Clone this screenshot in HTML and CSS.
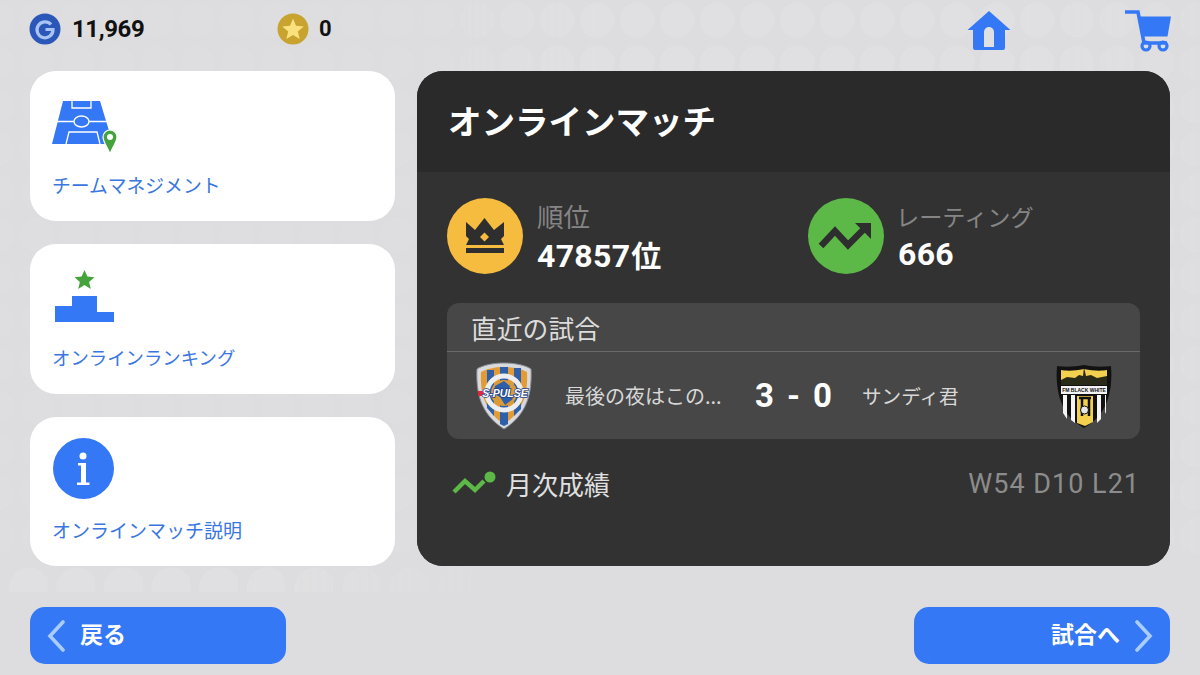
FILE: index.html
```html
<!DOCTYPE html>
<html lang="ja">
<head>
<meta charset="utf-8">
<title>オンラインマッチ</title>
<link rel="stylesheet" href="styles.css">
</head>
<body>
<div class="page">
  <div class="dots"></div>
  <div class="dots-low"></div>
  <header class="topbar">
    <div class="currency gp">
      <svg class="coin" viewBox="0 0 32 32"><circle cx="16" cy="16" r="15.5" fill="#2b58b8"/><path d="M22 11.5A8 8 0 1 0 24 16.500H16.500" fill="none" stroke="#a9c3f2" stroke-width="3.200"/></svg>
      <span class="amount">11,969</span>
    </div>
    <div class="currency star">
      <svg class="coin" viewBox="0 0 32 32"><circle cx="16" cy="16" r="15.500" fill="#c8a32f"/><path d="M16 5.500l3 7.300 7.800.6-6 5 1.900 7.600L16 21.900l-6.700 4.100 1.900-7.600-6-5 7.800-.6z" fill="#fbe07f"/></svg>
      <span class="amount">0</span>
    </div>
    <nav class="topicons">
      <svg class="home" viewBox="0 0 44 40"><path d="M22 0L43.500 19H38V37a2 2 0 0 1-2 2H8a2 2 0 0 1-2-2V19H.5z" fill="#3478f6"/><path d="M17 36V21a5 5 0 0 1 10 0V36z" fill="#e0e0e2"/></svg>
      <svg class="cart" viewBox="0 0 48 42"><path d="M1 2H14L20 33H43" fill="none" stroke="#3478f6" stroke-width="3.600"/><path d="M14.500 6.500H47L43.500 26.500H18z" fill="#3478f6"/><circle cx="22" cy="36" r="4" fill="none" stroke="#3478f6" stroke-width="3.200"/><circle cx="39" cy="36" r="4" fill="none" stroke="#3478f6" stroke-width="3.200"/></svg>
    </nav>
  </header>

  <main class="content">
    <aside class="side">
      <a class="card">
        <svg class="icon-pitch" viewBox="0 0 66 54">
          <path d="M11 0H48L61 43H0z" fill="#3478f6"/>
          <g fill="none" stroke="#fff" stroke-width="1.300">
            <path d="M4 20.500H57"/>
            <path d="M20 0V7H39V0"/>
            <ellipse cx="29.500" cy="20.500" rx="7.500" ry="5.500" fill="#3478f6"/>
            <path d="M14 43L17 31H45L48 43"/>
          </g>
          <path d="M58 29a7 7 0 0 1 7 7c0 5-4 9-7 17-3-8-7-12-7-17a7 7 0 0 1 7-7z" fill="#45a23c" stroke="#fff" stroke-width="1.200"/>
          <circle cx="58" cy="36" r="3" fill="#fff"/>
        </svg>
        <span class="label label-first">チームマネジメント</span>
      </a>
      <a class="card">
        <svg class="icon-rank" viewBox="0 0 60 53">
          <path d="M29.500 0l2.900 6.600 7.100.6-5.400 4.700 1.700 7-6.300-3.900-6.300 3.900 1.700-7-5.400-4.700 7.100-.6z" fill="#45a23c"/>
          <path d="M0 36H17V26H42V42H59V52H0z" fill="#3478f6"/>
        </svg>
        <span class="label label-tight">オンラインランキング</span>
      </a>
      <a class="card">
        <svg class="icon-info" viewBox="0 0 61 61">
          <circle cx="30.500" cy="30.500" r="30.500" fill="#3478f6"/>
          <circle cx="30" cy="18" r="3.500" fill="#fff"/>
          <path d="M25 25H33V44.500H36.500V47H24V44.500H28V27.500H25z" fill="#fff"/>
        </svg>
        <span class="label label-wide">オンラインマッチ説明</span>
      </a>
    </aside>

    <section class="panel">
      <h1 class="panel-title">オンラインマッチ</h1>
      <div class="panel-body">
        <div class="stats">
          <div class="stat">
            <svg class="stat-icon" viewBox="0 0 76 76">
              <circle cx="38" cy="38" r="38" fill="#f5bc3f"/>
              <path d="M19 24L28 32L37.500 20L47 32L57 24V38L54 41L57 47H19L22 41L19 38z" fill="#2e2e2e"/>
              <path d="M37.500 34.500l4.500 4.500-4.500 4.500-4.500-4.500z" fill="#f5bc3f"/>
              <rect x="19" y="50" width="38" height="5" fill="#2e2e2e"/>
            </svg>
            <div class="stat-text">
              <div class="stat-label stat-label-wide">順位</div>
              <div class="stat-value">47857<span class="unit">位</span></div>
            </div>
          </div>
          <div class="stat">
            <svg class="stat-icon" viewBox="0 0 76 76">
              <circle cx="38" cy="38" r="38" fill="#5cb947"/>
              <path d="M13 48L27 33L40 47L57 30" fill="none" stroke="#2e2e2e" stroke-width="6.500"/>
              <path d="M47 25H63V41z" fill="#2e2e2e"/>
            </svg>
            <div class="stat-text">
              <div class="stat-label stat-label-kana">レーティング</div>
              <div class="stat-value">666</div>
            </div>
          </div>
        </div>

        <div class="recent">
          <div class="recent-head">直近の試合</div>
          <div class="recent-row">
            <svg class="crest crest-a" viewBox="0 0 56 68">
              <path d="M28 1C38 1 49 3 55 7C56 30 52 52 28 67C4 52 0 30 1 7C7 3 18 1 28 1z" fill="#d8dadd" stroke="#8b8f94"/>
              <path d="M28 5C37 5 46 7 51 10C52 30 48 49 28 62C8 49 4 30 5 10C10 7 19 5 28 5z" fill="#e39b35"/>
              <path d="M11 8h7v46l-7-8zM24 5h8v57l-4 2-4-2zM38 6h7v41l-7 7z" fill="#2f5fa8"/>
              <circle cx="28" cy="31" r="17" fill="none" stroke="#eceef0" stroke-width="5"/>
              <circle cx="28" cy="31" r="13" fill="#d99a3c"/>
              <path d="M19 24l9-5 6 5-2 8 5 5-8 6-5-8-6-3z" fill="#2f5fa8"/>
              <rect x="2" y="29" width="6" height="5" fill="#e0263a"/>
              <text x="29" y="35" class="crest-text-a">S-PULSE</text>
            </svg>
            <span class="team team-home">最後の夜はこの...</span>
            <span class="score"><span>3</span><span>-</span><span>0</span></span>
            <span class="team team-away">サンディ君</span>
            <svg class="crest crest-b" viewBox="0 0 56 64">
              <path d="M28 1C38 3 48 3 55 2C57 30 50 52 28 64C6 52-1 30 1 2C8 3 18 3 28 1z" fill="#111"/>
              <path d="M28 5C37 7 46 7 51 6V21H5V6C10 7 19 7 28 5z" fill="#f3d04e"/>
              <path d="M5 16l6-3 8 1 4-3 4 1 1-9 2 9 5-1 6 3 10-2v9H5z" fill="#2a2a18"/>
              <rect x="5" y="22" width="46" height="8" fill="#f4f4f4"/>
              <text x="28" y="28.200" class="crest-text-b">FM BLACK WHITE</text>
              <path d="M7 31h4v24l-4-6zM15 31h4v28l-4-3zM41 31h4v24l-4 4zM49 31h1v17l-1 2z" fill="#f4f4f4"/>
              <path d="M21 32h16v26l-8 4-8-3z" fill="#f3d04e"/>
              <path d="M23 34h12M26 34v18M33 34v18" stroke="#111" stroke-width="2.500" fill="none"/>
              <circle cx="28.500" cy="46" r="4" fill="#e8e8e8" stroke="#111"/>
            </svg>
          </div>
        </div>

        <div class="monthly">
          <div class="monthly-left">
            <svg class="monthly-icon" viewBox="0 0 44 24">
              <path d="M2 21L13 10L23 19L32 10" fill="none" stroke="#5cb947" stroke-width="4.500"/>
              <circle cx="38" cy="6" r="5.500" fill="#5cb947"/>
            </svg>
            <span>月次成績</span>
          </div>
          <div class="record">W54 D10 L21</div>
        </div>
      </div>
    </section>
  </main>

  <footer class="actions">
    <a class="btn btn-back">
      <svg class="chev" viewBox="0 0 18 32"><path d="M16 2L3 16L16 30" fill="none" stroke="#a9ccfb" stroke-width="3.600" stroke-linecap="round"/></svg>
      <span class="btn-text">戻る</span>
    </a>
    <a class="btn btn-next">
      <span class="btn-text">試合へ</span>
      <svg class="chev" viewBox="0 0 18 32"><path d="M2 2L15 16L2 30" fill="none" stroke="#a9ccfb" stroke-width="3.600" stroke-linecap="round"/></svg>
    </a>
  </footer>
</div>
</body>
</html>
```

FILE: styles.css
```css
* { box-sizing: border-box; }
html, body { margin: 0; padding: 0; }
body {
  width: 1200px;
  height: 675px;
  overflow: hidden;
  background: #dddde0;
  font-family: "Noto Sans CJK JP", "Noto Sans", sans-serif;
}
.page {
  position: relative;
  width: 1200px;
  height: 675px;
  display: flex;
  flex-direction: column;
  padding: 0 30px;
}
.dots {
  position: absolute;
  left: 0;
  top: 0;
  width: 1200px;
  height: 560px;
  background-image: radial-gradient(circle at 20px 20px, #e0e0e2 17px, rgba(224,224,226,0) 18px);
  background-size: 40px 43px;
  background-position: 17px 0;
  -webkit-mask-image: linear-gradient(90deg, rgba(0,0,0,.3) 0, rgba(0,0,0,.3) 35%, #000 50%, #000 85%, rgba(0,0,0,.5) 100%);
  mask-image: linear-gradient(90deg, rgba(0,0,0,.3) 0, rgba(0,0,0,.3) 35%, #000 50%, #000 85%, rgba(0,0,0,.5) 100%);
}
.dots-low {
  position: absolute;
  left: 0;
  top: 560px;
  width: 1200px;
  height: 32px;
  background-image: radial-gradient(circle at 29px 28px, #e0e0e2 20px, rgba(224,224,226,0) 21px);
  background-size: 47.600px 47.600px;
  -webkit-mask-image: linear-gradient(90deg, #000 0, #000 20%, rgba(0,0,0,.2) 40%, rgba(0,0,0,.2) 100%);
  mask-image: linear-gradient(90deg, #000 0, #000 20%, rgba(0,0,0,.2) 40%, rgba(0,0,0,.2) 100%);
}
.topbar {
  position: relative;
  height: 71px;
  flex: none;
  display: flex;
  align-items: flex-start;
  padding-top: 13px;
}
.currency { display: flex; align-items: center; height: 32px; }
.currency.gp { width: 247px; }
.coin { width: 32px; height: 32px; margin-right: 11px; flex: none; }
.gp .coin { margin-left: -1px; }
.star .coin { margin-right: 10px; }
.amount {
  font-family: Roboto, sans-serif;
  font-weight: 700;
  font-size: 24px;
  line-height: 32px;
  letter-spacing: -.4px;
  color: #111;
}
.star .amount { font-size: 22px; }
.topicons {
  margin-left: auto;
  margin-right: -2px;
  display: flex;
  align-items: flex-start;
  gap: 113px;
}
.home { width: 44px; height: 40px; margin-top: -2px; }
.cart { width: 48px; height: 42px; margin-top: -3px; }

.content {
  position: relative;
  display: flex;
  gap: 22px;
  height: 495px;
  flex: none;
}
.side {
  width: 365px;
  flex: none;
  display: flex;
  flex-direction: column;
  gap: 23px;
}
.card {
  height: 150px;
  flex: none;
  background: #fff;
  border-radius: 26px;
  padding: 0 22px;
  display: flex;
  flex-direction: column;
  justify-content: flex-start;
  position: relative;
}
.card:last-child { height: 149px; }
.label {
  color: #3a76e0;
  font-size: 18.800px;
  line-height: 28px;
  white-space: nowrap;
  position: absolute;
  left: 22px;
  bottom: 22px;
}
.label-tight { font-size: 18.400px; bottom: 23px; }
.label-wide { font-size: 19px; }
.icon-pitch { width: 66px; height: 54px; margin-top: 30px; }
.icon-rank { width: 60px; height: 53px; margin-top: 26px; margin-left: 3px; }
.icon-info { width: 61px; height: 61px; margin-top: 21px; margin-left: 1px; }

.panel {
  flex: 1;
  background: #323232;
  border-radius: 26px;
  overflow: hidden;
  display: flex;
  flex-direction: column;
}
.panel-title {
  margin: 0;
  height: 101px;
  flex: none;
  background: #2a2a2a;
  color: #fff;
  font-size: 33.500px;
  font-weight: 700;
  line-height: 97px;
  padding-left: 31px;
}
.panel-body {
  flex: 1;
  background: #323232;
  padding: 26px 30px 0;
  display: flex;
  flex-direction: column;
}
.stats { display: flex; height: 76px; }
.stat { display: flex; width: 361px; flex: none; }
.stat-icon { width: 76px; height: 76px; flex: none; margin-right: 14px; }
.stat-text { display: flex; flex-direction: column; }
.stat-label {
  color: #858585;
  font-size: 23.200px;
  line-height: 36px;
}
.stat-label-wide { font-size: 26.500px; }
.stat-label-kana { margin-left: -2px; }
.stat-value {
  color: #fff;
  font-family: Roboto, "Noto Sans CJK JP", sans-serif;
  font-weight: 700;
  font-size: 32px;
  line-height: 40px;
  letter-spacing: .3px;
}
.unit { font-family: "Noto Sans CJK JP", sans-serif; font-size: 30px; margin-left: 1px; }

.recent {
  margin-top: 29px;
  height: 136px;
  width: 693px;
  background: #474747;
  border-radius: 12px;
  flex: none;
}
.recent-head {
  height: 49px;
  border-bottom: 1px solid #6a6a6a;
  color: #dcdcdc;
  font-size: 25.800px;
  line-height: 50px;
  padding-left: 24px;
}
.recent-row {
  height: 87px;
  display: flex;
  align-items: center;
  position: relative;
  padding-left: 29px;
}
.crest-a { width: 56px; height: 68px; flex: none; }
.crest-b { width: 56px; height: 64px; flex: none; margin-left: auto; margin-right: 28px; }
.team { color: #d8d8d8; font-size: 19.600px; white-space: nowrap; line-height: 28px; }
.team-home { margin-left: 33px; width: 172px; flex: none; font-size: 20px; }
.team-away { margin-left: 25px; }
.score {
  width: 82px;
  flex: none;
  display: flex;
  justify-content: space-between;
  padding: 0 5px 0 0;
  margin-left: 18px;
  color: #fff;
  font-family: Roboto, sans-serif;
  font-weight: 700;
  font-size: 33px;
  line-height: 40px;
}
.crest-text-a { font-family: "Liberation Sans", sans-serif; font-size: 10.500px; font-weight: 700; fill: #fff; stroke: #1d3f86; stroke-width: 1.500px; paint-order: stroke; text-anchor: middle; font-style: italic; }
.crest-text-b { font-family: "Liberation Sans", sans-serif; font-size: 5px; font-weight: 700; fill: #111; text-anchor: middle; }

.monthly {
  margin-top: 22px;
  display: flex;
  align-items: center;
  justify-content: space-between;
  width: 693px;
  height: 44px;
}
.monthly-left {
  display: flex;
  align-items: center;
  color: #e0e0e0;
  font-size: 26px;
  padding-left: 5px;
}
.monthly-icon { width: 44px; height: 24px; margin-right: 10px; }
.record {
  color: #8c8c8c;
  font-family: Roboto, sans-serif;
  font-size: 27px;
  letter-spacing: 1px;
  padding-top: 1px;
}

.actions {
  position: relative;
  display: flex;
  justify-content: space-between;
  margin-top: 41px;
}
.btn {
  width: 256px;
  height: 57px;
  background: #3478f6;
  border-radius: 15px;
  color: #fff;
  font-size: 23px;
  font-weight: 700;
  display: flex;
  align-items: center;
}
.btn-text { padding-bottom: 5px; }
.btn-back { padding-left: 17px; gap: 15px; }
.btn-next { justify-content: flex-end; padding-right: 17px; gap: 15px; }
.chev { width: 18px; height: 32px; flex: none; }
```
